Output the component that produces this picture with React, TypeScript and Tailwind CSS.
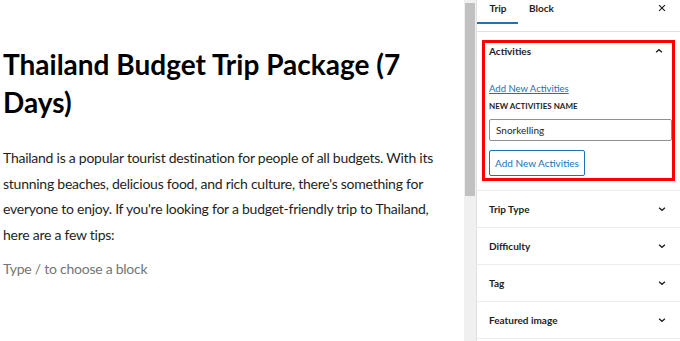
import React from 'react';

const body = { fontFamily: 'Lato, "Noto Sans", sans-serif' };

const ChevronDown = () => (
  <svg width="10" height="10" viewBox="0 0 24 24" fill="none" stroke="#1e1e1e" strokeWidth="3.2">
    <path d="M5 9l7 6 7-6" />
  </svg>
);

const ChevronUp = () => (
  <svg width="10" height="10" viewBox="0 0 24 24" fill="none" stroke="#1e1e1e" strokeWidth="3.2">
    <path d="M5 15l7-6 7 6" />
  </svg>
);

const Row: React.FC<{ label: string }> = ({ label }) => (
  <div className="flex items-center justify-between h-[37px] border-t border-[#ececec] pl-[12px] pr-[13px]">
    <span className="text-[10px] font-bold text-[#1e1e1e]">{label}</span>
    <ChevronDown />
  </div>
);

export default function App() {
  return (
    <div className="flex w-[680px] h-[341px] overflow-hidden bg-white" style={body}>
      {/* Editor canvas */}
      <div className="w-[464px] shrink-0 overflow-hidden pl-[3px] pt-[45px]">
        <h1 className="text-[28px] font-bold leading-[38px] text-black whitespace-nowrap">
          Thailand Budget Trip Package (7
          <br />
          Days)
        </h1>
        <p className="mt-[24px] text-[14px] tracking-[-0.25px] leading-[25.7px] text-[#1e1e1e] whitespace-nowrap">
          Thailand is a popular tourist destination for people of all budgets. With its
          <br />
          stunning beaches, delicious food, and rich culture, there's something for
          <br />
          everyone to enjoy. If you're looking for a budget-friendly trip to Thailand,
          <br />
          here are a few tips:
        </p>
        <p className="mt-[8px] text-[14px] tracking-[-0.25px] leading-[25px] text-[#757575]">Type / to choose a block</p>
      </div>

      {/* Scrollbar */}
      <div className="w-[12px] shrink-0 bg-[#f0f0f0] flex flex-col pt-[3px] px-[1px]">
        <div className="h-[193px] bg-[#c1c1c1]" />
      </div>

      {/* Sidebar */}
      <div className="flex-1 border-l border-[#e0e0e0] flex flex-col">
        <div className="h-[32px] border-b border-[#e0e0e0] flex items-start pr-[13px]">
          <div className="w-[41px] h-[24px] flex justify-center border-b-2 border-[#2271b1] pt-[1px] pl-[1px] text-[10px] leading-[14px] font-bold text-[#1e1e1e]">
            Trip
          </div>
          <div className="ml-[11px] pt-[1px] text-[10px] leading-[14px] font-bold text-[#1e1e1e]">Block</div>
          <div className="ml-auto pt-[3px]">
            <svg width="10" height="10" viewBox="0 0 24 24" fill="none" stroke="#1e1e1e" strokeWidth="2.8">
              <path d="M5 5l14 14M19 5L5 19" />
            </svg>
          </div>
        </div>

        <div className="mx-[5px] mt-[8px] mb-[9px] border-[3px] border-[#ff0000] pl-[4px] pb-[2px]">
          <div className="flex items-center justify-between h-[16px] pr-[8px]">
            <span className="text-[10px] font-bold text-[#1e1e1e]">Activities</span>
            <ChevronUp />
          </div>
          <div className="mt-[23px] text-[9.5px] text-[#2271b1] underline leading-[14px]">Add New Activities</div>
          <div className="mt-[4px] text-[8px] font-bold uppercase text-[#1e1e1e] leading-[12px]">
            New Activities Name
          </div>
          <div className="mt-[7px] h-[22px] border border-[#8c8f94] rounded-[2px] flex items-center px-[6px] text-[10px] text-[#1e1e1e]">
            Snorkelling
          </div>
          <div className="mt-[9px] w-[96px] h-[26px] border border-[#2271b1] rounded-[2px] flex items-center justify-center text-[10px] text-[#2271b1]">
            Add New Activities
          </div>
        </div>

        <Row label="Trip Type" />
        <Row label="Difficulty" />
        <Row label="Tag" />
        <Row label="Featured image" />
        <div className="border-t border-[#ececec]" />
      </div>
    </div>
  );
}
